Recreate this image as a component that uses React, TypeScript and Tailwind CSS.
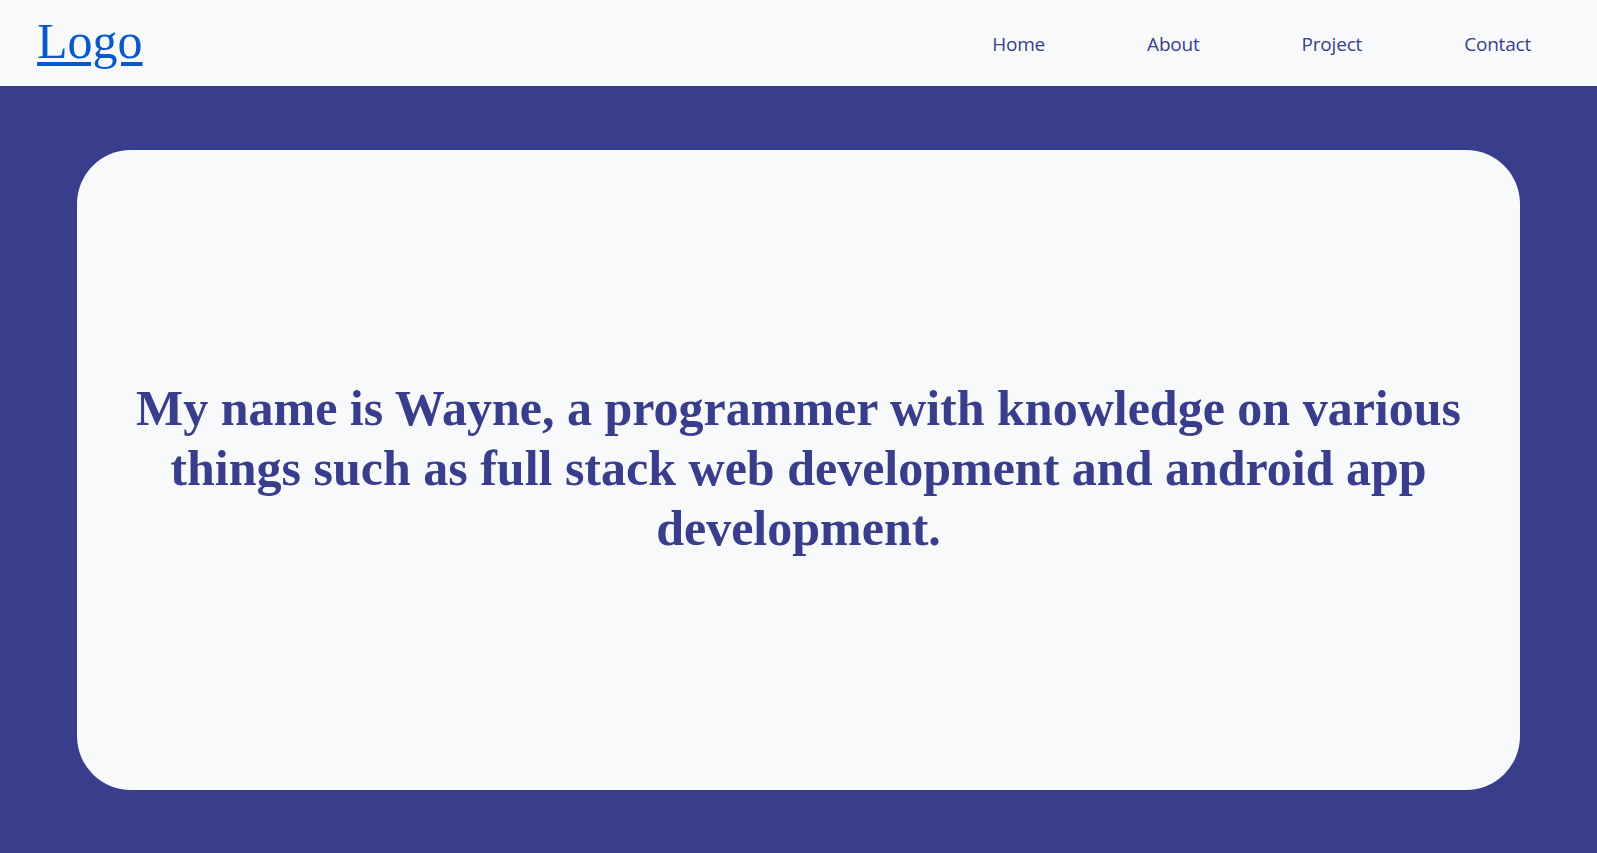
export default function App() {
  const links = ['Home', 'About', 'Project', 'Contact'];

  return (
    <div className="min-h-screen bg-[#383e8c] flex flex-col">
      {/* Navbar */}
      <nav className="h-[86px] bg-[#f8f9fa] flex items-center justify-between pl-[37px] pr-[66px]">
        <a
          href="#"
          className="text-[50px] leading-none text-[#0a58ca] underline decoration-[4px] underline-offset-[4px] font-['Liberation_Serif','Times_New_Roman',serif] -mt-[4px]"
        >
          Logo
        </a>
        <ul className="flex items-center gap-[102px] font-['Open_Sans','Noto_Sans',sans-serif] text-[19px] text-[#383e8c] mt-[2px]">
          {links.map((link) => (
            <li key={link}>
              <a href="#" className="tracking-[-0.2px]">
                {link}
              </a>
            </li>
          ))}
        </ul>
      </nav>

      {/* Intro card */}
      <main className="px-[77px] pt-[64px]">
        <div className="h-[640px] bg-[#f8f9fa] rounded-[54px] flex items-center justify-center px-[40px]">
          <h1 className="text-center font-bold text-[#383e8c] text-[50px] leading-[60px] font-['Liberation_Serif','Times_New_Roman',serif] -mt-[4px]">
            My name is Wayne, a programmer with knowledge on various things such as full stack web development and android app development.
          </h1>
        </div>
      </main>
    </div>
  );
}
